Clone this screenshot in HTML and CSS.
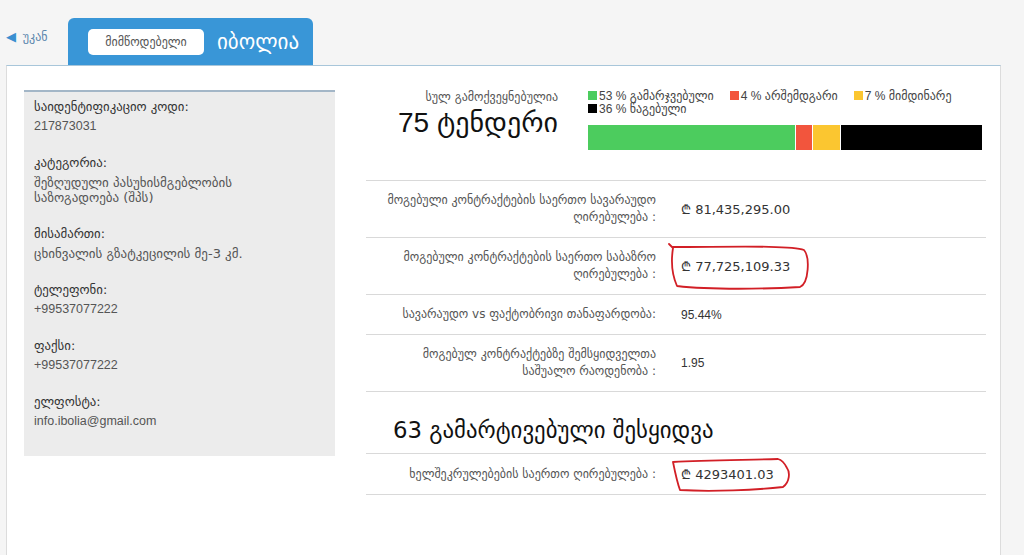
FILE: index.html
```html
<!DOCTYPE html>
<html lang="ka">
<head>
    <meta charset="UTF-8">
    <meta name="viewport" content="width=device-width, initial-scale=1.0">
    <title>იბოლია</title>
    <link rel="stylesheet" href="styles.css">
</head>
<body>
    <div class="top">
        <a class="back" href="#"><span class="back-arrow">&#9664;</span> უკან</a>
        <div class="tab">
            <span class="tab-btn">მიმწოდებელი</span>
            <span class="tab-name">იბოლია</span>
        </div>
    </div>

    <div class="panel">
        <div class="sidebar">
            <div class="field">
                <div class="field-label">საიდენტიფიკაციო კოდი:</div>
                <div class="field-value">217873031</div>
            </div>
            <div class="field">
                <div class="field-label">კატეგორია:</div>
                <div class="field-value geo">შეზღუდული პასუხისმგებლობის საზოგადოება (შპს)</div>
            </div>
            <div class="field">
                <div class="field-label">მისამართი:</div>
                <div class="field-value geo">ცხინვალის გზატკეცილის მე-3 კმ.</div>
            </div>
            <div class="field">
                <div class="field-label">ტელეფონი:</div>
                <div class="field-value">+99537077222</div>
            </div>
            <div class="field">
                <div class="field-label">ფაქსი:</div>
                <div class="field-value">+99537077222</div>
            </div>
            <div class="field">
                <div class="field-label">ელფოსტა:</div>
                <div class="field-value">info.ibolia@gmail.com</div>
            </div>
        </div>

        <div class="content">
            <div class="summary">
                <div class="total">
                    <div class="total-caption">სულ გამოქვეყნებულია</div>
                    <div class="total-count">75 ტენდერი</div>
                </div>
                <div class="chart">
                    <div class="legend">
                        <span class="legend-item"><i class="swatch won"></i>53 % გამარჯვებული</span>
                        <span class="legend-item"><i class="swatch failed"></i>4 % არშემდგარი</span>
                        <span class="legend-item"><i class="swatch current"></i>7 % მიმდინარე</span>
                        <span class="legend-item"><i class="swatch lost"></i>36 % წაგებული</span>
                    </div>
                    <div class="bar">
                        <div class="seg won" style="width: 53%"></div>
                        <div class="seg failed" style="width: 4%"></div>
                        <div class="seg current" style="width: 7%"></div>
                        <div class="seg lost" style="width: 36%"></div>
                    </div>
                </div>
            </div>

            <table class="stats">
                <tr>
                    <td class="stat-label">მოგებული კონტრაქტების საერთო სავარაუდო ღირებულება :</td>
                    <td class="stat-value money">₾ 81,435,295.00</td>
                </tr>
                <tr>
                    <td class="stat-label">მოგებული კონტრაქტების საერთო საბაზრო ღირებულება :</td>
                    <td class="stat-value money">
                        ₾ 77,725,109.33
                        <svg class="mark mark-big" width="148" height="54" viewBox="0 0 148 54">
                            <path d="M3,3 L7,7 C5,20 6,34 11,45 C45,49 100,48 134,46 C143,42 144,16 138,9 C125,4 60,6 7,6" />
                        </svg>
                    </td>
                </tr>
                <tr>
                    <td class="stat-label">სავარაუდო vs ფაქტობრივი თანაფარდობა:</td>
                    <td class="stat-value">95.44%</td>
                </tr>
                <tr>
                    <td class="stat-label">მოგებულ კონტრაქტებზე შემსყიდველთა საშუალო რაოდენობა :</td>
                    <td class="stat-value">1.95</td>
                </tr>
            </table>

            <h2 class="section-title">63 გამარტივებული შესყიდვა</h2>

            <table class="stats">
                <tr>
                    <td class="stat-label">ხელშეკრულებების საერთო ღირებულება :</td>
                    <td class="stat-value money">
                        ₾ 4293401.03
                        <svg class="mark mark-small" width="130" height="44" viewBox="0 0 130 44">
                            <path d="M7,8 C9,18 11,28 14,36 C45,38 90,36 117,33 C124,28 124,18 121,14 C118,8 116,6 112,5 C80,6 40,6 7,8" />
                        </svg>
                    </td>
                </tr>
            </table>
        </div>
    </div>
</body>
</html>
```

FILE: styles.css
```css
body {
    margin: 0;
    background-color: #f5f5f5;
    font-family: "Liberation Sans", "DejaVu Sans", sans-serif;
    color: #333;
    overflow: hidden;
}

/* Back link and supplier tab */
.top {
    display: flex;
    align-items: flex-end;
    height: 65px;
    padding-left: 6px;
}

.back {
    align-self: flex-start;
    width: 62px;
    margin-top: 29px;
    font-family: "DejaVu Sans", sans-serif;
    font-size: 12px;
    color: #5b87ad;
    text-decoration: none;
}

.back-arrow {
    color: #3a8fd0;
    font-size: 13px;
    margin-right: 3px;
}

.tab {
    display: flex;
    align-items: center;
    width: 225px;
    height: 47px;
    padding-left: 20px;
    background-color: #3996d7;
    border-radius: 6px 6px 0 0;
    font-family: "DejaVu Sans", sans-serif;
}

.tab-btn {
    display: inline-block;
    width: 116px;
    line-height: 26px;
    text-align: center;
    background-color: #fff;
    border-radius: 5px;
    font-size: 12px;
    color: #555;
}

.tab-name {
    margin-left: 13px;
    font-size: 21px;
    color: #fff;
}

/* Main panel */
.panel {
    display: flex;
    align-items: flex-start;
    margin-left: 6px;
    width: 976px;
    min-height: 500px;
    padding: 24px 0 0 17px;
    background-color: #fff;
    border: 1px solid #dcdcdc;
    border-top-color: #a8c6da;
}

.sidebar {
    width: 291px;
    height: 358px;
    padding: 6px 10px 0;
    background-color: #ececec;
    border-top: 2px solid #a3b6c7;
}

.field {
    margin-bottom: 20px;
}

.field-label {
    font-family: "DejaVu Sans", sans-serif;
    font-size: 12.8px;
    line-height: 18px;
    color: #333;
}

.field-value {
    margin-top: 3px;
    font-size: 12.5px;
    line-height: 15px;
    color: #555;
}

.field-value.geo {
    max-width: 250px;
    font-family: "DejaVu Sans", sans-serif;
    font-size: 13px;
}

/* Right column */
.content {
    width: 620px;
    margin-left: 31px;
}

.summary {
    display: flex;
    height: 90px;
    border-bottom: 1px solid #d9d9d9;
}

.total {
    width: 192px;
    text-align: right;
    font-family: "DejaVu Sans", sans-serif;
}

.total-caption {
    font-size: 12px;
    color: #555;
}

.total-count {
    margin-top: 2px;
    font-family: "Liberation Sans", "DejaVu Sans", sans-serif;
    font-size: 28px;
    color: #111;
}

.chart {
    margin-left: 30px;
    width: 394px;
}

.legend {
    display: flex;
    flex-wrap: wrap;
    column-gap: 16px;
    font-size: 12px;
    line-height: 13px;
    color: #444;
}

.swatch {
    display: inline-block;
    width: 9px;
    height: 9px;
    margin-right: 2px;
}

.bar {
    display: flex;
    gap: 1px;
    height: 25px;
    margin-top: 9px;
}

.seg {
    height: 100%;
}

.won { background-color: #4ccc5e; }
.failed { background-color: #f2553d; }
.current { background-color: #fbc630; }
.lost { background-color: #000; }

.stats {
    width: 100%;
    border-collapse: collapse;
}

.stats td {
    border-bottom: 1px solid #d9d9d9;
    padding: 11px 0;
    vertical-align: middle;
}

.stat-label {
    width: 280px;
    padding-left: 10px !important;
    text-align: right;
    font-family: "DejaVu Sans", sans-serif;
    font-size: 12px;
    line-height: 17px;
    color: #555;
}

.stat-value {
    position: relative;
    padding-left: 25px !important;
    font-size: 12px;
    color: #333;
}

.stat-value.money {
    font-family: "DejaVu Sans", sans-serif;
    font-size: 13px;
}

.section-title {
    margin: 0;
    padding: 25px 0 10px 27px;
    font-family: "DejaVu Sans", sans-serif;
    font-weight: normal;
    font-size: 22.8px;
    color: #111;
    border-bottom: 1px solid #d9d9d9;
}

/* hand drawn red marks over the values */
.mark {
    position: absolute;
    pointer-events: none;
}

.mark path {
    fill: none;
    stroke: #d21f26;
    stroke-width: 1.8;
    stroke-linecap: round;
    stroke-linejoin: round;
}

.mark-big {
    left: 10px;
    top: 3px;
}

.mark-small {
    left: 10px;
    top: 0;
}
```
